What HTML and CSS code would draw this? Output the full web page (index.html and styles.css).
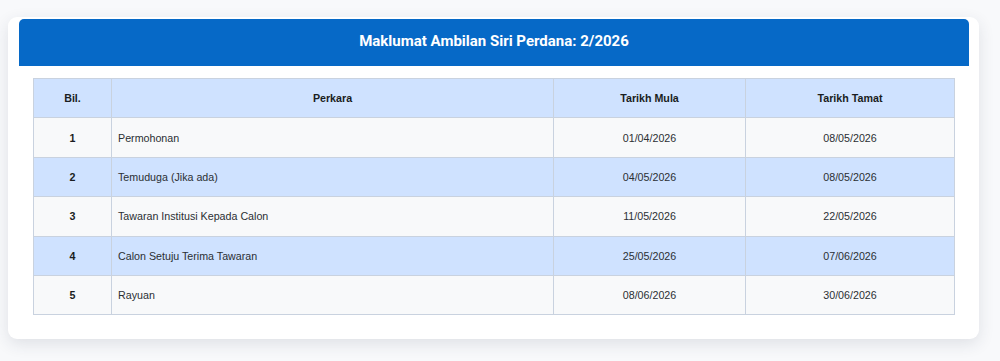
FILE: index.html
```html
<!DOCTYPE html>
<html lang="ms">
<head>
<meta charset="utf-8">
<title>Maklumat Ambilan</title>
<link rel="stylesheet" href="styles.css">
</head>
<body>
<div class="card">
  <div class="card-header">Maklumat Ambilan Siri Perdana: 2/2026</div>
  <div class="card-body">
    <table class="schedule">
      <colgroup>
        <col class="c-bil">
        <col class="c-perkara">
        <col class="c-mula">
        <col class="c-tamat">
      </colgroup>
      <thead>
        <tr>
          <th>Bil.</th>
          <th>Perkara</th>
          <th>Tarikh Mula</th>
          <th>Tarikh Tamat</th>
        </tr>
      </thead>
      <tbody>
        <tr class="odd"><td class="num">1</td><td class="item">Permohonan</td><td>01/04/2026</td><td>08/05/2026</td></tr>
        <tr class="even"><td class="num">2</td><td class="item">Temuduga (Jika ada)</td><td>04/05/2026</td><td>08/05/2026</td></tr>
        <tr class="odd"><td class="num">3</td><td class="item">Tawaran Institusi Kepada Calon</td><td>11/05/2026</td><td>22/05/2026</td></tr>
        <tr class="even"><td class="num">4</td><td class="item">Calon Setuju Terima Tawaran</td><td>25/05/2026</td><td>07/06/2026</td></tr>
        <tr class="odd"><td class="num">5</td><td class="item">Rayuan</td><td>08/06/2026</td><td>30/06/2026</td></tr>
      </tbody>
    </table>
  </div>
</div>
</body>
</html>
```
FILE: styles.css
```css
html, body {
  margin: 0;
  padding: 0;
}
body {
  background: #f8f9fb;
  font-family: "Liberation Sans", Arial, sans-serif;
  color: #2b2f33;
  padding: 17px 21px 23px 8px;
}
.card {
  background: #ffffff;
  border-radius: 9px;
  box-shadow: 0 5px 16px rgba(40, 50, 70, 0.12);
  padding: 2px 10px 24px 11px;
}
.card-header {
  background: #0669c7;
  color: #ffffff;
  font-family: Roboto, "Liberation Sans", sans-serif;
  font-weight: 700;
  font-size: 15px;
  text-align: center;
  height: 47px;
  line-height: 45px;
  border-radius: 5px 5px 0 0;
}
.card-body {
  padding: 12px 14px 0 14px;
}
.schedule {
  width: 100%;
  border-collapse: collapse;
  table-layout: fixed;
  font-size: 10.7px;
}
.c-bil { width: 78px; }
.c-perkara { width: 442px; }
.c-mula { width: 192px; }
.c-tamat { width: auto; }
.schedule th,
.schedule td {
  border: 1px solid #c9d2df;
  height: 38.4px;
  padding: 0 6px;
  text-align: center;
  vertical-align: middle;
}
.schedule th {
  background: #cfe2ff;
  font-weight: 700;
  color: #1a1d21;
}
.schedule td.num {
  font-weight: 700;
  color: #1a1d21;
}
.schedule td.item {
  text-align: left;
}
.schedule tr.odd td {
  background: #f8f9fa;
}
.schedule tr.even td {
  background: #cfe2ff;
}
```
